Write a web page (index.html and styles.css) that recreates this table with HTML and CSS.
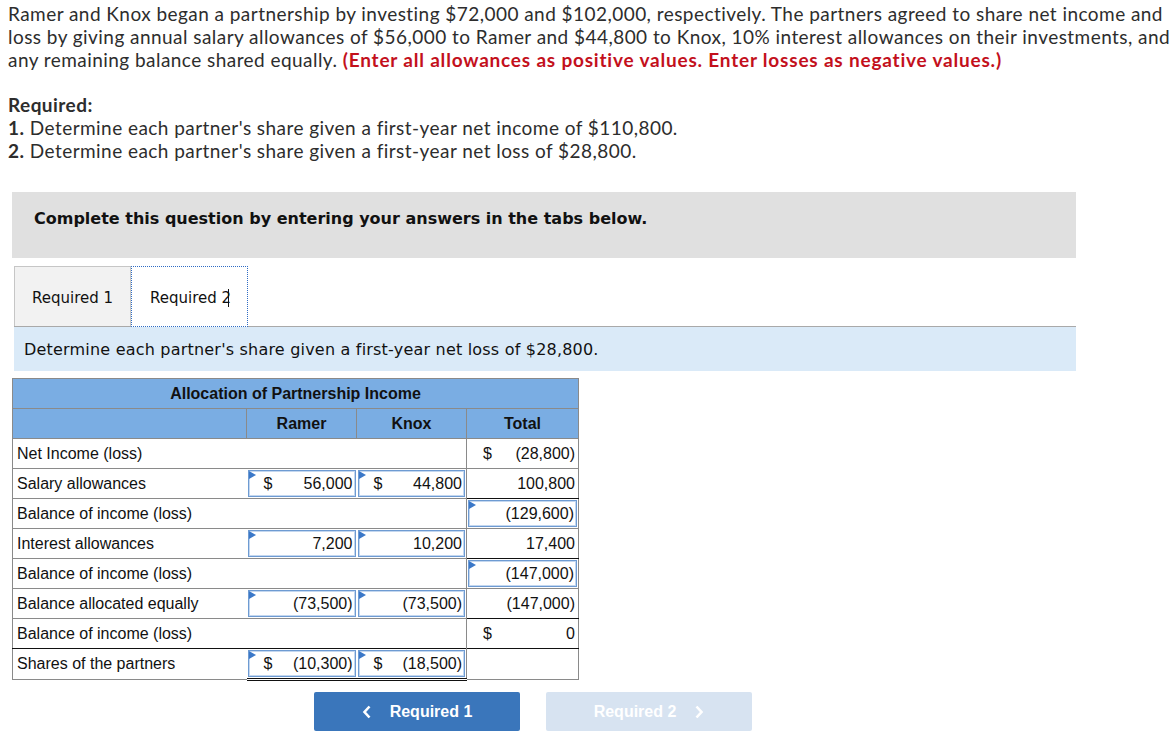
FILE: index.html
```html
<!DOCTYPE html>
<html lang="en">
<head>
    <meta charset="UTF-8">
    <title>Partnership allocation</title>
    <link rel="stylesheet" href="styles.css">
</head>
<body>
    <div class="question">
        <p class="intro">Ramer and Knox began a partnership by investing $72,000 and $102,000, respectively. The partners agreed to share net income and<br>loss by giving annual salary allowances of $56,000 to Ramer and $44,800 to Knox, 10% interest allowances on their investments, and<br>any remaining balance shared equally. <span class="warn">(Enter all allowances as positive values. Enter losses as negative values.)</span></p>

        <p class="req-title">Required:</p>
        <p class="req-item"><b>1.</b> Determine each partner's share given a first-year net income of $110,800.</p>
        <p class="req-item"><b>2.</b> Determine each partner's share given a first-year net loss of $28,800.</p>
    </div>

    <div class="panel">
        <div class="instruction">Complete this question by entering your answers in the tabs below.</div>

        <div class="tabs">
            <div class="tab">Required 1</div>
            <div class="tab active">Required 2<span class="caret"></span></div>
        </div>

        <div class="banner">Determine each partner's share given a first-year net loss of $28,800.</div>

        <table class="alloc">
            <colgroup>
                <col class="c-label">
                <col class="c-num">
                <col class="c-num">
                <col class="c-total">
            </colgroup>
            <tr class="head">
                <th colspan="4" class="title">Allocation of Partnership Income</th>
            </tr>
            <tr class="head">
                <th></th>
                <th class="sep">Ramer</th>
                <th class="sep">Knox</th>
                <th class="sep">Total</th>
            </tr>
            <tr>
                <td class="label">Net Income (loss)</td>
                <td></td>
                <td></td>
                <td class="tot"><div class="val"><span class="cur">$</span>(28,800)</div></td>
            </tr>
            <tr>
                <td class="label">Salary allowances</td>
                <td><div class="val input"><span class="cur">$</span>56,000</div></td>
                <td><div class="val input"><span class="cur">$</span>44,800</div></td>
                <td class="tot"><div class="val">100,800</div></td>
            </tr>
            <tr>
                <td class="label">Balance of income (loss)</td>
                <td></td>
                <td></td>
                <td class="tot rule"><div class="val input">(129,600)</div></td>
            </tr>
            <tr>
                <td class="label">Interest allowances</td>
                <td><div class="val input">7,200</div></td>
                <td><div class="val input">10,200</div></td>
                <td class="tot"><div class="val">17,400</div></td>
            </tr>
            <tr>
                <td class="label">Balance of income (loss)</td>
                <td></td>
                <td></td>
                <td class="tot rule"><div class="val input">(147,000)</div></td>
            </tr>
            <tr>
                <td class="label">Balance allocated equally</td>
                <td><div class="val input">(73,500)</div></td>
                <td><div class="val input">(73,500)</div></td>
                <td class="tot"><div class="val">(147,000)</div></td>
            </tr>
            <tr>
                <td class="label">Balance of income (loss)</td>
                <td></td>
                <td></td>
                <td class="tot rule"><div class="val"><span class="cur">$</span>0</div></td>
            </tr>
            <tr class="shares">
                <td class="label">Shares of the partners</td>
                <td class="dbl"><div class="val input"><span class="cur">$</span>(10,300)</div></td>
                <td class="dbl"><div class="val input"><span class="cur">$</span>(18,500)</div></td>
                <td class="tot"></td>
            </tr>
        </table>

        <div class="nav">
            <button class="nav-btn prev">
                <svg class="chev left" width="10" height="14" viewBox="0 0 10 14"><path d="M7.5 1.5 L2.5 7 L7.5 12.5" fill="none" stroke="#fff" stroke-width="2.6"/></svg>
                Required 1
            </button>
            <button class="nav-btn next" disabled>
                Required 2
                <svg class="chev right" width="10" height="14" viewBox="0 0 10 14"><path d="M2.5 1.5 L7.5 7 L2.5 12.5" fill="none" stroke="#fff" stroke-width="2.6"/></svg>
            </button>
        </div>
    </div>
</body>
</html>
```

FILE: styles.css
```css
html, body {
    margin: 0;
    padding: 0;
    background-color: #fff;
}

.question {
    padding: 2px 8px 0 8px;
    font-family: Lato, "Open Sans", sans-serif;
    font-size: 19px;
    letter-spacing: 0.45px;
    color: #2d2d2d;
}

.question p {
    margin: 0;
    line-height: 23px;
}

.intro {
    white-space: nowrap;
}

.warn {
    color: #c3101c;
    font-weight: bold;
    letter-spacing: 0.8px;
}

.question .req-title {
    margin-top: 22px;
    font-weight: bold;
}

.panel {
    margin: 30px 0 0 12px;
    width: 1064px;
}

.instruction {
    background-color: #e0e0e0;
    height: 66px;
    line-height: 54px;
    padding-left: 22px;
    font-family: "DejaVu Sans", Verdana, sans-serif;
    font-weight: bold;
    font-size: 16px;
    color: #111;
}

.tabs {
    display: flex;
    margin: 8px 0 0 2px;
    border-bottom: 1px solid #a9a9a9;
}

.tab {
    width: 115px;
    height: 59px;
    line-height: 62px;
    text-align: center;
    font-family: "DejaVu Sans", Tahoma, sans-serif;
    font-size: 15px;
    color: #111;
    background-color: #f2f2f2;
    border: 1px solid #c6c6c6;
    border-bottom: none;
}

.tab.active {
    background-color: #fff;
    border: 1px dotted #2f6cc4;
    margin-bottom: -1px;
}

.caret {
    display: inline-block;
    width: 1px;
    height: 18px;
    background-color: #111;
    vertical-align: -4px;
    margin-left: -3px;
}

.banner {
    margin-left: 2px;
    background-color: #daeaf8;
    height: 44px;
    line-height: 45px;
    padding-left: 10px;
    font-family: "DejaVu Sans", Tahoma, sans-serif;
    font-size: 16px;
    letter-spacing: 0.2px;
    color: #111;
}

.alloc {
    margin-top: 7px;
    border-collapse: collapse;
    border: 1px solid #8a8a8a;
    font-family: "Liberation Sans", Arial, sans-serif;
    font-size: 16px;
    color: #111;
}

.c-label { width: 234px; }
.c-num { width: 110px; }
.c-total { width: 112px; }

.alloc tr {
    height: 30px;
}

.alloc th, .alloc td {
    padding: 0;
    border-top: 1px solid #8a8a8a;
}

.head th {
    background-color: #7aade3;
    font-weight: bold;
    text-align: center;
    height: 29px;
}

.head th.sep {
    border-left: 1px solid #8a8a8a;
}

.alloc td.label {
    padding-left: 4px;
    height: 29px;
}

.alloc td.tot {
    border-left: 1px solid #8a8a8a;
}

.alloc td.rule {
    border-top: 1px solid #111;
}

.shares td {
    border-top: 1px solid #111;
}

.shares td.dbl {
    border-bottom: 3px double #111;
}

.val {
    position: relative;
    display: flex;
    justify-content: flex-end;
    align-items: center;
    height: 27px;
    margin: 1px;
    padding: 0 2px 0 15px;
    box-sizing: border-box;
}

.val .cur {
    margin-right: auto;
}

.input {
    border: 1px solid #6e9bd2;
    box-shadow: inset 0 0 0 1px #c4d7ef;
}

.input::before {
    content: "";
    position: absolute;
    left: 0;
    top: 0;
    border-left: 7px solid #3b78c8;
    border-top: 4px solid transparent;
    border-bottom: 4px solid transparent;
}

.nav {
    display: flex;
    gap: 26px;
    margin: 11px 0 0 302px;
}

.nav-btn {
    width: 206px;
    height: 39px;
    border: none;
    border-radius: 2px;
    font-family: "Liberation Sans", Arial, sans-serif;
    font-weight: bold;
    font-size: 16px;
    color: #fff;
    display: flex;
    align-items: center;
    justify-content: center;
    gap: 18px;
}

.prev {
    background-color: #3a76bb;
}

.next {
    background-color: #d7e3f1;
}
```
